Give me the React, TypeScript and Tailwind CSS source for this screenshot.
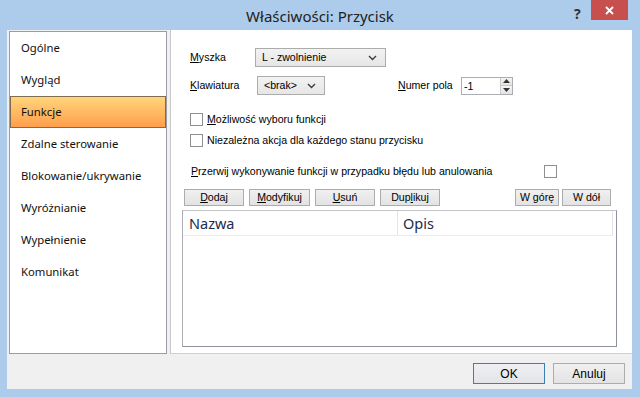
import React from 'react';

const sections = [
  'Ogólne',
  'Wygląd',
  'Funkcje',
  'Zdalne sterowanie',
  'Blokowanie/ukrywanie',
  'Wyróżnianie',
  'Wypełnienie',
  'Komunikat',
];

function Chevron() {
  return (
    <svg width="9" height="6" viewBox="0 0 9 6" className="shrink-0">
      <path d="M1 1 L4.5 4.5 L8 1" fill="none" stroke="#3c3c3c" strokeWidth="1.4" />
    </svg>
  );
}

function Combo({ value, width }: { value: string; width: string }) {
  return (
    <div
      className={`${width} h-[19px] flex items-center justify-between pl-[6px] pr-[8px] border border-[#acacac] bg-gradient-to-b from-[#f2f2f2] to-[#e6e6e6]`}
    >
      <span>{value}</span>
      <Chevron />
    </div>
  );
}

function Check() {
  return <div className="w-[13px] h-[13px] border border-[#8f8f8f] bg-white shrink-0" />;
}

function Btn({ children, width }: { children: React.ReactNode; width: string }) {
  return (
    <div
      className={`${width} h-[17px] flex items-center justify-center border border-[#acacac] bg-gradient-to-b from-[#f0f0f0] to-[#e3e3e3]`}
    >
      {children}
    </div>
  );
}

export default function App() {
  return (
    <div className="w-[640px] h-[397px] bg-[#adcbea] flex flex-col font-['Liberation_Sans',Arial,sans-serif] text-[10.6px] text-black overflow-hidden">
      {/* Title bar */}
      <div className="h-[30px] relative flex items-center justify-center shrink-0">
        <span className="text-[15px] text-[#222] font-['Noto_Sans',sans-serif] leading-none pt-[2px]">
          Właściwości: Przycisk
        </span>
        <span className="absolute left-[574px] top-[3px] text-[14px] font-bold text-[#333] font-['Noto_Sans',sans-serif]">
          ?
        </span>
        <div className="absolute left-[591px] top-0 w-[37px] h-[20px] bg-[#c7504f] flex items-center justify-center">
          <svg width="9" height="9" viewBox="0 0 9 9">
            <path d="M1 1 L8 8 M8 1 L1 8" stroke="white" strokeWidth="1.8" />
          </svg>
        </div>
      </div>

      {/* Body */}
      <div className="ml-[7px] mr-[8px] h-[359px] bg-[#f0f0f0] flex flex-col">
        <div className="h-[324px] flex">
          {/* Sections list */}
          <div className="ml-[2px] mt-[1px] w-[158px] h-[323px] border border-[#9a9da3] bg-white font-['Noto_Sans',sans-serif] text-[11.3px] text-[#111]">
            {sections.map(s => (
              <div
                key={s}
                className={
                  s === 'Funkcje'
                    ? 'h-[32px] flex items-center pl-[10px] border border-[#7f6b4f] bg-gradient-to-b from-[#ffd57a] to-[#ff9e4c]'
                    : 'h-[32px] flex items-center pl-[11px]'
                }
              >
                {s}
              </div>
            ))}
          </div>

          {/* Function panel */}
          <div className="ml-[3px] flex-1 bg-white border-l border-b border-[#d0d0d0] border-l-[#c8c8c8] flex flex-col">
            <div className="pl-[19px] mt-[18px] flex items-center">
              <span className="w-[65px]">
                <u>M</u>yszka
              </span>
              <Combo value="L - zwolnienie" width="w-[131px]" />
            </div>
            <div className="pl-[19px] mt-[9px] flex items-center">
              <span className="w-[67px]">
                <u>K</u>lawiatura
              </span>
              <Combo value="<brak>" width="w-[68px]" />
              <span className="ml-[73px] w-[63px]">
                <u>N</u>umer pola
              </span>
              <div className="w-[52px] h-[18px] border border-[#abadb3] bg-white flex">
                <span className="flex-1 pl-[2px] leading-[16px]">-1</span>
                <div className="w-[12px] flex flex-col border-l border-[#c8c8c8]">
                  <div className="h-[8px] flex items-center justify-center bg-gradient-to-b from-[#f4f4f4] to-[#e4e4e4] border-b border-[#c8c8c8]">
                    <svg width="7" height="4" viewBox="0 0 7 4">
                      <path d="M0 4 L3.5 0 L7 4 Z" fill="#333" />
                    </svg>
                  </div>
                  <div className="flex-1 flex items-center justify-center bg-gradient-to-b from-[#f4f4f4] to-[#e4e4e4]">
                    <svg width="7" height="4" viewBox="0 0 7 4">
                      <path d="M0 0 L3.5 4 L7 0 Z" fill="#333" />
                    </svg>
                  </div>
                </div>
              </div>
            </div>

            <div className="pl-[19px] mt-[18px] h-[13px] flex items-center gap-[4px]">
              <Check />
              <span>
                <u>M</u>ożliwość wyboru funkcji
              </span>
            </div>
            <div className="pl-[19px] mt-[8px] h-[13px] flex items-center gap-[4px]">
              <Check />
              <span>Niezależna akcja dla każdego stanu przycisku</span>
            </div>

            <div className="pl-[20px] mt-[18px] h-[13px] flex items-center">
              <span className="w-[353px]">
                <u>P</u>rzerwij wykonywanie funkcji w przypadku błędu lub anulowania
              </span>
              <Check />
            </div>

            <div className="pl-[13px] mt-[11px] flex items-center">
              <div className="flex gap-[5px]">
                <Btn width="w-[60px]">
                  <span>
                    <u>D</u>odaj
                  </span>
                </Btn>
                <Btn width="w-[61px]">
                  <span>
                    <u>M</u>odyfikuj
                  </span>
                </Btn>
                <Btn width="w-[60px]">
                  <span>
                    <u>U</u>suń
                  </span>
                </Btn>
                <Btn width="w-[60px]">
                  <span>
                    Dup<u>l</u>ikuj
                  </span>
                </Btn>
              </div>
              <div className="ml-[75px] flex gap-[3px]">
                <Btn width="w-[44px]">W górę</Btn>
                <Btn width="w-[49px]">W dół</Btn>
              </div>
            </div>

            {/* Function list view */}
            <div className="ml-[11px] mt-[4px] w-[435px] h-[137px] border border-[#8e929a] border-t-[#c2c4c8] border-l-[#a9acb1] bg-white">
              <div className="h-[25px] flex border-b border-[#e5ecf5] font-['Noto_Sans',sans-serif] text-[14.5px] text-[#1b2d4a] w-[430px]">
                <div className="w-[215px] pl-[6px] pt-[2px] border-r border-[#e5e5e5]">Nazwa</div>
                <div className="flex-1 pl-[5px] pt-[2px] border-r border-[#e5e5e5]">Opis</div>
              </div>
            </div>
          </div>
        </div>

        {/* Footer */}
        <div className="flex-1 flex justify-end items-start pt-[9px] pr-[7px] gap-[8px] text-[12px]">
          <div className="w-[72px] h-[21px] flex items-center justify-center border border-[#3c7fb1] bg-gradient-to-b from-[#eef0f3] to-[#e2e4e8]">
            OK
          </div>
          <div className="w-[72px] h-[21px] flex items-center justify-center border border-[#acacac] bg-gradient-to-b from-[#f0f0f0] to-[#e3e3e3]">
            Anuluj
          </div>
        </div>
      </div>
    </div>
  );
}
